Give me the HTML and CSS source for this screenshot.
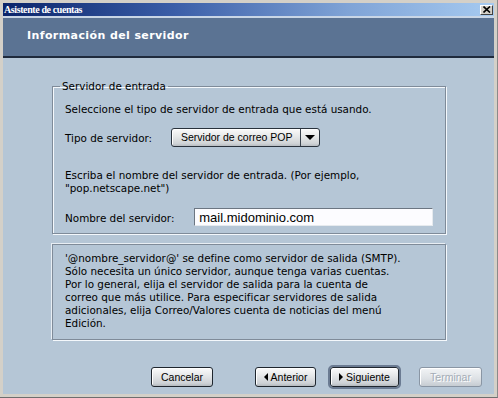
FILE: index.html
```html
<!DOCTYPE html>
<html lang="es">
<head>
    <meta charset="UTF-8">
    <title>Asistente de cuentas</title>
    <link rel="stylesheet" href="styles.css">
</head>
<body>
    <div class="window">
        <div class="titlebar">
            <span class="title">Asistente de cuentas</span>
            <span class="close">
                <svg width="8" height="7" viewBox="0 0 8 7"><path d="M0.5 0.5 L7 6.5 M7 0.5 L0.5 6.5" stroke="#000" stroke-width="1.6"/></svg>
            </span>
        </div>
        <div class="banner">
            <h1>Información del servidor</h1>
        </div>
        <div class="content">
            <fieldset class="group">
                <legend>Servidor de entrada</legend>
                <p class="text">Seleccione el tipo de servidor de entrada que está usando.</p>
                <div class="field-row row-type">
                    <label class="label-type">Tipo de servidor:</label>
                    <button class="select">
                        <span class="select-text">Servidor de correo POP</span>
                        <span class="select-arrow"></span>
                    </button>
                </div>
                <p class="text">Escriba el nombre del servidor de entrada. (Por ejemplo,<br>"pop.netscape.net")</p>
                <div class="field-row row-name">
                    <label class="label-name">Nombre del servidor:</label>
                    <input type="text" class="server-input" value="mail.midominio.com">
                </div>
            </fieldset>

            <div class="note">
                '@nombre_servidor@' se define como servidor de salida (SMTP).<br>
                Sólo necesita un único servidor, aunque tenga varias cuentas.<br>
                Por lo general, elija el servidor de salida para la cuenta de<br>
                correo que más utilice. Para especificar servidores de salida<br>
                adicionales, elija Correo/Valores cuenta de noticias del menú<br>
                Edición.
            </div>

            <div class="actions">
                <button class="btn btn-cancel">Cancelar</button>
                <button class="btn btn-back"><span class="tri-left"></span>Anterior</button>
                <button class="btn btn-next"><span class="tri-right"></span>Siguiente</button>
                <button class="btn btn-finish" disabled>Terminar</button>
            </div>
        </div>
    </div>
</body>
</html>
```

FILE: styles.css
```css
* {
    margin: 0;
    padding: 0;
    box-sizing: border-box;
}
body {
    font-family: "DejaVu Sans", Verdana, sans-serif;
    background: #d4d0c8;
}
.window {
    width: 498px;
    height: 398px;
    background: #d4d0c8;
    padding: 3px 3px 3px 3px;
    border-right: 1px solid #8a8a8a;
    border-bottom: 1px solid #6e6e6e;
    display: flex;
    flex-direction: column;
}
.titlebar {
    height: 15px;
    background: linear-gradient(to right, #0a246a, #3b5ea8 35%, #7fa3d6 70%, #a6caf0);
    border-bottom: 2px solid #c9d6e6;
    display: flex;
    align-items: center;
    justify-content: space-between;
    padding: 0 1px 0 1px;
}
.title {
    font-family: "Liberation Serif", serif;
    font-weight: 700;
    font-size: 10px;
    letter-spacing: -0.4px;
    color: #fff;
    line-height: 12px;
}
.close {
    width: 13px;
    height: 10px;
    background: #d4d0c8;
    border: 1px solid;
    border-color: #fff #404040 #404040 #fff;
    display: flex;
    align-items: center;
    justify-content: center;
}
.close svg {
    display: block;
}
.banner {
    height: 40px;
    background: #5b7393;
    border-bottom: 2px solid #1f2a3c;
    padding: 0 0 0 24px;
    display: flex;
    align-items: center;
}
.banner h1 {
    font-size: 11px;
    font-weight: 700;
    letter-spacing: 0.4px;
    color: #fff;
    margin-top: -3px;
}
.content {
    flex-grow: 1;
    background: #b5c6d6;
    padding: 22px 0 0 49px;
}
.group {
    width: 394px;
    border: 1px solid #7f8b99;
    box-shadow: 1px 1px 0 #f4f8fc, inset 1px 1px 0 #f4f8fc;
    padding: 10px 12px 7px 12px;
    margin: 0;
    min-width: 0;
}
.group legend {
    font-size: 10.4px;
    line-height: 13px;
    color: #000;
    padding: 0 2px;
    margin-left: -5px;
}
.text {
    font-size: 10.4px;
    line-height: 13px;
    color: #000;
}
.field-row {
    display: flex;
    align-items: center;
    font-size: 10.4px;
    line-height: 13px;
}
.row-type {
    margin: 12px 0 22px 0;
}
.row-name {
    margin-top: 13px;
}
.field-row label {
    padding-top: 2px;
}
.label-type {
    width: 106px;
}
.label-name {
    width: 130px;
}
.select {
    width: 149px;
    height: 19px;
    border: 1px solid #29323c;
    border-radius: 3px;
    background: linear-gradient(#fafafa, #e6e8e8 45%, #cfd3d6 85%, #b8bdc2);
    box-shadow: inset 1px 1px 0 #fff;
    display: flex;
    align-items: stretch;
    font-family: "Liberation Sans", Arial, sans-serif;
    font-size: 10.5px;
    color: #000;
}
.select-text {
    flex-grow: 1;
    text-align: left;
    padding-left: 9px;
    line-height: 17px;
}
.select-arrow {
    width: 19px;
    border-left: 1px solid #3a434e;
    position: relative;
}
.select-arrow::after {
    content: "";
    position: absolute;
    left: 4px;
    top: 6px;
    border-left: 5px solid transparent;
    border-right: 5px solid transparent;
    border-top: 5px solid #000;
}
.server-input {
    width: 240px;
    height: 18px;
    border: 1px solid;
    border-color: #6c7682 #e6eaee #e6eaee #6c7682;
    background: #fcfcff;
    font-family: "Liberation Sans", Arial, sans-serif;
    font-size: 13px;
    color: #000;
    padding: 0 4px;
    outline: none;
}
.note {
    width: 394px;
    margin-top: 10px;
    border: 1px solid #7f8b99;
    box-shadow: -1px -1px 0 #e8eef4, 1px 1px 0 #f4f8fc;
    padding: 7px 12px 9px 12px;
    font-size: 10.4px;
    line-height: 13px;
    color: #000;
    white-space: nowrap;
}
.actions {
    display: flex;
    margin-top: 27px;
    padding-left: 99px;
}
.btn {
    height: 20px;
    border: 1px solid #1f262e;
    border-radius: 3px;
    background: linear-gradient(#fbfbfb, #e4e6e8 45%, #cdd1d5 85%, #b4b9be);
    box-shadow: inset 1px 1px 0 #fff;
    font-family: "Liberation Sans", Arial, sans-serif;
    font-size: 10.5px;
    color: #000;
    display: flex;
    align-items: center;
    justify-content: center;
    line-height: 12px;
}
.btn-cancel {
    width: 62px;
}
.btn-back {
    width: 61px;
    margin-left: 42px;
}
.btn-next {
    width: 69px;
    margin-left: 14px;
    outline: 2px solid #6b7b92;
}
.btn-finish {
    width: 63px;
    margin-left: 20px;
    border-color: #8a96a4;
    background: linear-gradient(#f2f4f6, #dde1e5 60%, #c6ccd2);
    color: #a3acb6;
    text-shadow: 1px 1px 0 #fff;
}
.tri-left {
    width: 0;
    height: 0;
    border-top: 4px solid transparent;
    border-bottom: 4px solid transparent;
    border-right: 4px solid #000;
    margin-right: 3px;
}
.tri-right {
    width: 0;
    height: 0;
    border-top: 4px solid transparent;
    border-bottom: 4px solid transparent;
    border-left: 4px solid #000;
    margin-right: 3px;
}
```
